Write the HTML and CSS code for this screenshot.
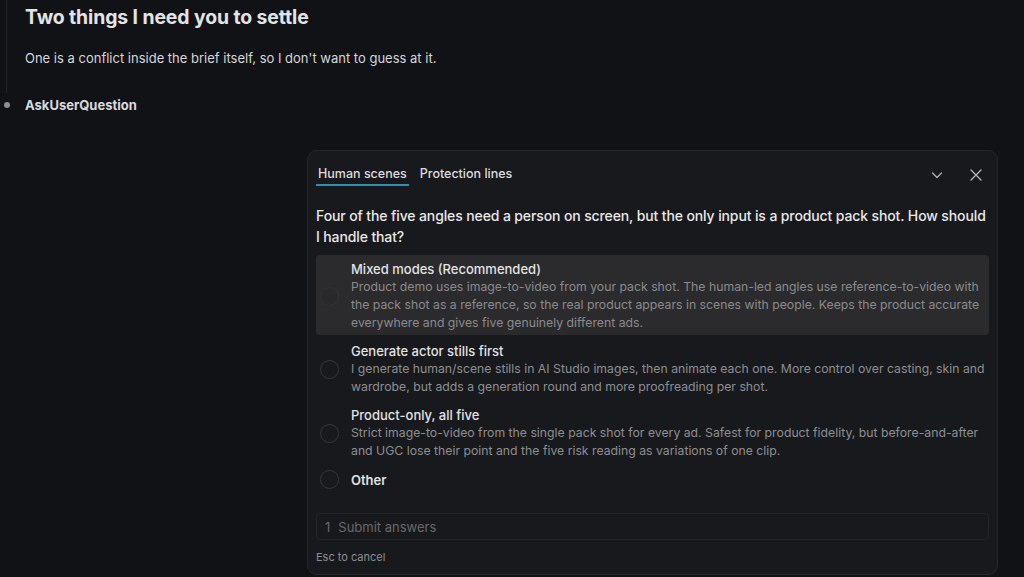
FILE: index.html
```html
<!DOCTYPE html>
<html lang="en">
<head>
<meta charset="utf-8">
<title>AskUserQuestion</title>
<link rel="stylesheet" href="styles.css">
</head>
<body>
<div class="page">
  <div class="message">
    <h2 class="title">Two things I need you to settle</h2>
    <p class="lead">One is a conflict inside the brief itself, so I don't want to guess at it.</p>
  </div>
  <div class="tool">
    <span class="dot"></span>
    <span class="tool-name">AskUserQuestion</span>
  </div>

  <div class="panel">
    <div class="panel-head">
      <div class="tabs">
        <span class="tab active">Human scenes</span>
        <span class="tab">Protection lines</span>
      </div>
      <div class="head-actions">
        <svg class="icon" width="14" height="14" viewBox="0 0 14 14"><path d="M2.5 5 L7 9.5 L11.5 5" fill="none" stroke="#a9aaae" stroke-width="1.4" stroke-linecap="round" stroke-linejoin="round"/></svg>
        <svg class="icon" width="14" height="14" viewBox="0 0 14 14"><path d="M2 2 L12 12 M12 2 L2 12" fill="none" stroke="#b4b5b9" stroke-width="1.4" stroke-linecap="round"/></svg>
      </div>
    </div>

    <p class="question">Four of the five angles need a person on screen, but the only input is a product pack shot. How should I handle that?</p>

    <div class="options">
      <div class="option selected">
        <span class="radio"></span>
        <div class="opt-text">
          <div class="opt-title">Mixed modes (Recommended)</div>
          <div class="opt-desc">Product demo uses image-to-video from your pack shot. The human-led angles use reference-to-video with the pack shot as a reference, so the real product appears in scenes with people. Keeps the product accurate everywhere and gives five genuinely different ads.</div>
        </div>
      </div>
      <div class="option">
        <span class="radio"></span>
        <div class="opt-text">
          <div class="opt-title">Generate actor stills first</div>
          <div class="opt-desc">I generate human/scene stills in AI Studio images, then animate each one. More control over casting, skin and wardrobe, but adds a generation round and more proofreading per shot.</div>
        </div>
      </div>
      <div class="option">
        <span class="radio"></span>
        <div class="opt-text">
          <div class="opt-title">Product-only, all five</div>
          <div class="opt-desc">Strict image-to-video from the single pack shot for every ad. Safest for product fidelity, but before-and-after and UGC lose their point and the five risk reading as variations of one clip.</div>
        </div>
      </div>
      <div class="option other">
        <span class="radio"></span>
        <div class="opt-text">
          <div class="opt-title">Other</div>
        </div>
      </div>
    </div>

    <div class="submit"><span class="num">1</span><span>Submit answers</span></div>
    <div class="hint">Esc to cancel</div>
  </div>
</div>
</body>
</html>
```

FILE: styles.css
```css
* { box-sizing: border-box; }
html, body {
  margin: 0;
  padding: 0;
  background: #111216;
  height: 100%;
  overflow: hidden;
}
body {
  font-family: Inter, "Noto Sans", "Liberation Sans", sans-serif;
  color: #e6e6e8;
}
.page {
  display: flex;
  flex-direction: column;
}
.message {
  margin-left: 6px;
  border-left: 1px solid #25262b;
  padding: 5px 0 26px 18px;
}
.title {
  margin: 0;
  font-size: 19.4px;
  line-height: 24px;
  font-weight: 700;
  color: #e4e4e6;
  letter-spacing: -0.1px;
}
.lead {
  margin: 20px 0 0;
  font-size: 13px;
  line-height: 18px;
  color: #d6d6d9;
}
.tool {
  display: flex;
  align-items: center;
  height: 18px;
  margin-top: 3px;
}
.dot {
  width: 6px;
  height: 6px;
  border-radius: 50%;
  background: #8d8e92;
  margin-left: 4px;
  margin-right: 15px;
}
.tool-name {
  font-size: 13px;
  font-weight: 700;
  color: #d9d9dc;
}
.panel {
  margin-left: 307px;
  margin-top: 36px;
  width: 691px;
  background: #18191c;
  border: 1px solid #26272b;
  border-radius: 10px;
  padding: 0 8px 10px 8px;
}
.panel-head {
  display: flex;
  align-items: flex-end;
  justify-content: space-between;
  padding-top: 15px;
}
.tabs {
  display: flex;
  gap: 9px;
}
.tab {
  font-size: 12.5px;
  line-height: 16px;
  font-weight: 500;
  color: #dcdcdf;
  padding: 0 2px 2px;
  border-bottom: 2px solid transparent;
}
.tab.active {
  border-bottom-color: #3c8aa3;
}
.head-actions {
  display: flex;
  gap: 25px;
  align-items: center;
  align-self: center;
  margin-right: 6px;
  margin-top: -3px;
}
.icon { display: block; }
.question {
  margin: 19px 0 8px;
  font-size: 14px;
  letter-spacing: -0.12px;
  line-height: 21px;
  font-weight: 500;
  color: #e8e8ea;
}
.options {
  display: flex;
  flex-direction: column;
  gap: 2px;
}
.option {
  display: flex;
  align-items: center;
  gap: 12px;
  padding: 5px 0 3px 4px;
  border-radius: 4px;
}
.option.selected {
  background: #2b2b2d;
}
.radio {
  flex: none;
  width: 19px;
  height: 19px;
  border-radius: 50%;
  border: 1.5px solid #36373b;
}
.option.selected .radio {
  border-color: #343436;
  background: #29292b;
}
.opt-title {
  font-size: 13px;
  line-height: 18px;
  font-weight: 500;
  color: #e2e2e4;
}
.opt-desc {
  font-size: 12.25px;
  line-height: 18px;
  color: #8d8e92;
}
.option.selected .opt-desc { color: #8a8a8c; }
.option.other .opt-title { font-weight: 600; }
.submit {
  margin-top: 21px;
  height: 27px;
  border: 1px solid #25262a;
  border-radius: 5px;
  display: flex;
  align-items: center;
  gap: 8px;
  padding-left: 8px;
  font-size: 13px;
  color: #67686d;
}
.hint {
  margin-top: 10px;
  font-size: 11px;
  line-height: 14px;
  color: #8c8d91;
}
```
